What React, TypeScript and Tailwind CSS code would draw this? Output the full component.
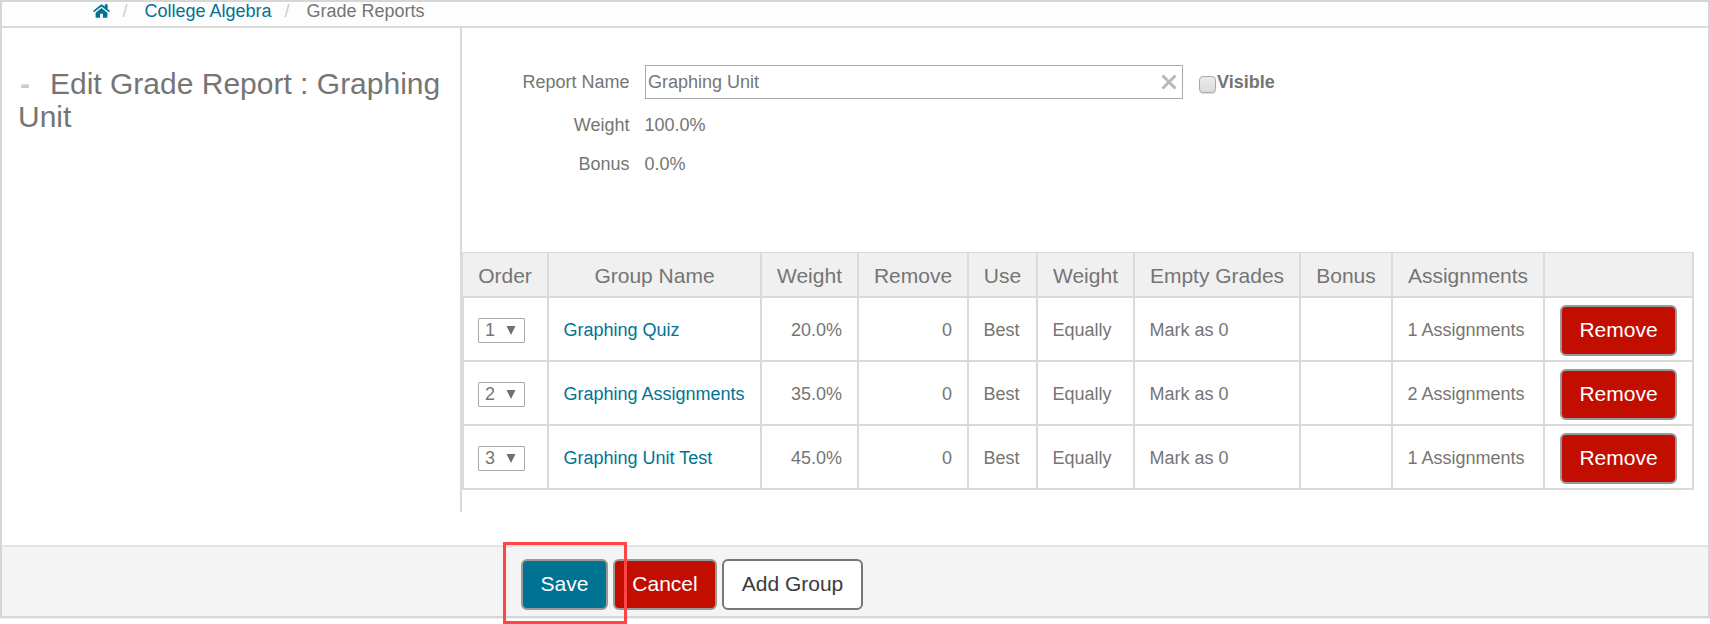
import React from "react";

const headers = ["Order", "Group Name", "Weight", "Remove", "Use", "Weight", "Empty Grades", "Bonus", "Assignments", ""];

const groups = [
  { order: 1, name: "Graphing Quiz", weight: "20.0%", count: 1 },
  { order: 2, name: "Graphing Assignments", weight: "35.0%", count: 2 },
  { order: 3, name: "Graphing Unit Test", weight: "45.0%", count: 1 },
];

const td = "h-16 border-r-2 border-b-2 border-[#dadada] pr-[15px] pl-[14.5px] pt-[2px] align-middle whitespace-nowrap";

function Button({ className, children }: { className: string; children: React.ReactNode }) {
  return (
    <button className={`flex h-[51px] items-center justify-center rounded-[6px] border-2 pb-px text-[21px] leading-6 ${className}`}>
      {children}
    </button>
  );
}

function OrderSelect({ value }: { value: number }) {
  return (
    <div className="mt-[3px] flex h-[25px] w-[47px] items-center rounded-[1px] border border-[#a9a9a9] pb-px pl-[6px] text-[18px] leading-[18px]">
      <span className="w-[20.5px]">{value}</span>
      <svg width="10" height="9" viewBox="0 0 10 9" className="fill-[#707070]">
        <path d="M0.5 0h9L5 9z" />
      </svg>
    </div>
  );
}

export default function App() {
  return (
    <div className="relative h-[624px] w-[1710px] overflow-hidden bg-white font-['Liberation_Sans',Arial,sans-serif] text-[18px] leading-[18px] text-[#757575]">
      <div className="flex h-[618px] flex-col border-2 border-[#d6d6d6] shadow-[0_1px_0_#f2f2f2]">
        <nav className="flex h-[26px] shrink-0 items-start border-b-2 border-[#dadada] bg-[#fdfdfd] pl-[90.5px]">
          <svg width="17" height="14" viewBox="0 0 17 14" className="mt-[2px] fill-[#007393]">
            <path d="M8.5 3.9 2.6 8.7V13q0 .7.7.7h3.8V9.8h2.8v3.9h3.8q.7 0 .7-.7V8.7zM16.7 6.8 14.6 5V.6q0-.3-.3-.3h-2.200q-.3 0-.3.3v2.100L9.400.700q-.9-.7-1.800 0L.3 6.800q-.2.2-.1.400l.7.800q.2.2.4 0L8.500 2.500l7.200 5.500q.2.2.4 0l.7-.8q.1-.2-.1-.4z" />
          </svg>
          <span className="ml-[13px] w-[22px] text-[#ccc]">/</span>
          <a className="w-[140px] text-[#007393]">College Algebra</a>
          <span className="w-[22px] text-[#ccc]">/</span>
          <span>Grade Reports</span>
        </nav>

        <div className="flex h-[517px] shrink-0 items-start">
          <aside className="h-[484px] w-[460px] shrink-0 border-r-2 border-[#dadada] pt-[39px] pl-[16px]">
            <h1 className="text-[30px] leading-[33px]">
              <span className="inline-block w-[32px] pl-[2px] font-bold text-[#ccc]">-</span>Edit Grade Report : Graphing
              <br />
              Unit
            </h1>
          </aside>

          <main className="flex flex-col">
            <div className="flex h-[224px] flex-col pt-[37px]">
              <div className="flex h-[34px] items-center">
                <label className="w-[167.5px] text-right">Report Name</label>
                <div className="ml-[15.5px] flex h-[34px] w-[538px] items-center justify-between border border-[#a9a9a9] pr-[5px] pl-[2px]">
                  <span>Graphing Unit</span>
                  <svg width="16" height="16" viewBox="0 0 16 16" className="stroke-[#b9b9b9]" strokeWidth="3">
                    <path d="M1.5 1.5l13 13M14.5 1.5l-13 13" />
                  </svg>
                </div>
                <span className="mt-[4px] ml-[16px] h-[17px] w-[17px] rounded-[4px] border border-[#aaa] bg-linear-to-b from-[#ececec] to-[#dcdcdc] shadow-[0_1px_1px_#ddd]" />
                <b className="ml-[1px]">Visible</b>
              </div>
              <div className="mt-[17px] flex h-[18px]">
                <span className="w-[167.5px] text-right">Weight</span>
                <span className="ml-[15px]">100.0%</span>
              </div>
              <div className="mt-[21px] flex h-[18px]">
                <span className="w-[167.5px] text-right">Bonus</span>
                <span className="ml-[15px]">0.0%</span>
              </div>
            </div>

            <table className="w-[1232px] table-fixed border-separate border-spacing-0">
              <colgroup>
                <col className="w-[87px]" />
                <col className="w-[213px]" />
                <col className="w-[97px]" />
                <col className="w-[110px]" />
                <col className="w-[69px]" />
                <col className="w-[97px]" />
                <col className="w-[166px]" />
                <col className="w-[92px]" />
                <col className="w-[152px]" />
                <col className="w-[149px]" />
              </colgroup>
              <thead>
                <tr>
                  {headers.map((label, i) => (
                    <th
                      key={i}
                      className="h-[46px] border-t border-r-2 border-b-2 border-[#dadada] bg-[#f0f0f0] px-0 pt-[2px] pb-0 text-center text-[21px] leading-6 font-normal whitespace-nowrap first:border-l"
                    >
                      {label}
                    </th>
                  ))}
                </tr>
              </thead>
              <tbody>
                {groups.map((g) => (
                  <tr key={g.order}>
                    <td className="h-16 border-r-2 border-b-2 border-l-2 border-[#dadada] pl-[14px] align-middle">
                      <OrderSelect value={g.order} />
                    </td>
                    <td className={td}><a className="text-[#007393]">{g.name}</a></td>
                    <td className={`${td} text-right`}>{g.weight}</td>
                    <td className={`${td} text-right`}>0</td>
                    <td className={td}>Best</td>
                    <td className={td}>Equally</td>
                    <td className={td}>Mark as 0</td>
                    <td className={td} />
                    <td className={td}>{g.count} Assignments</td>
                    <td className="h-16 border-r-2 border-b-2 border-[#dadada] pt-[2px] pl-[15px] align-middle">
                      <Button className="w-[117px] border-[#999] bg-[#c10e00] text-white">Remove</Button>
                    </td>
                  </tr>
                ))}
              </tbody>
            </table>
          </main>
        </div>

        <footer className="flex h-[71px] shrink-0 items-start gap-[5px] border-t-2 border-[#e3e3e3] bg-[#f4f4f4] pt-[12px] pl-[519px]">
          <Button className="w-[87px] border-[#999] bg-[#007393] text-white">Save</Button>
          <Button className="w-[104px] border-[#999] bg-[#c10e00] text-white">Cancel</Button>
          <Button className="w-[141px] border-[#777] bg-white text-[#3b3b3b]">Add Group</Button>
        </footer>
      </div>
      <div className="absolute top-[542px] left-[503px] h-[82px] w-[124px] border-3 border-[#ff4545]" />
    </div>
  );
}
